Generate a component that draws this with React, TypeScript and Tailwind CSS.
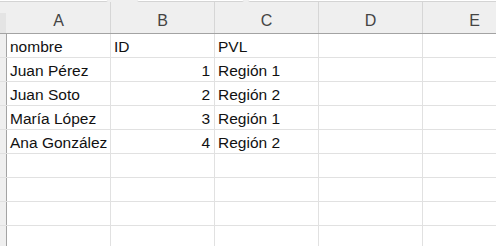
const columns = ["A", "B", "C", "D", "E"];

type Cell = { text: string; align?: "left" | "right" };

const rows: Cell[][] = [
  [{ text: "nombre" }, { text: "ID" }, { text: "PVL" }],
  [{ text: "Juan Pérez" }, { text: "1", align: "right" }, { text: "Región 1" }],
  [{ text: "Juan Soto" }, { text: "2", align: "right" }, { text: "Región 2" }],
  [{ text: "María López" }, { text: "3", align: "right" }, { text: "Región 1" }],
  [{ text: "Ana González" }, { text: "4", align: "right" }, { text: "Región 2" }],
  [],
  [],
  [],
  [],
];

export default function App() {
  return (
    <div
      className="h-[246px] w-[496px] overflow-hidden bg-white"
      style={{ fontFamily: '"Liberation Sans", Arial, sans-serif' }}
    >
      {/* bottoms of the name box / formula bar */}
      <div className="flex h-[2px] bg-[#efefef]">
        <div className="h-[2px] w-[108px] rounded-br-[3px] border-b border-[#d4d4d4] bg-white" />
        <div className="ml-[29px] h-[2px] w-[107px] rounded-b-[3px] border-b border-[#d4d4d4] bg-white" />
        <div className="ml-[4px] h-[2px] flex-1 rounded-bl-[3px] border-b border-[#d4d4d4] bg-white" />
      </div>

      {/* column headers */}
      <div className="flex h-[32px] border-b border-[#a3a3a3] bg-[#efefef]">
        <div className="flex w-[7px] shrink-0 flex-col justify-end">
          <div className="h-[20px] w-[6px] bg-[#e4e4e4]" />
        </div>
        {columns.map((c) => (
          <div
            key={c}
            className="flex w-[104px] shrink-0 items-end justify-center border-r border-[#d6d6d6] pb-[4px] text-[16px] leading-none text-[#444]"
          >
            {c}
          </div>
        ))}
      </div>

      {/* grid */}
      {rows.map((row, r) => (
        <div key={r} className="flex h-[24px] border-b border-[#e1e1e1]">
          <div className="w-[7px] shrink-0 border-r border-[#a3a3a3] bg-[#efefef]" />
          {columns.map((c, i) => {
            const cell = row[i];
            return (
              <div
                key={c}
                className={
                  "flex w-[104px] shrink-0 items-end overflow-hidden whitespace-nowrap border-r border-[#e1e1e1] pl-[3px] pr-[4px] pb-[2px] text-[15.5px] leading-[17px] text-[#111]" +
                  (cell?.align === "right" ? " justify-end" : " justify-start")
                }
              >
                {cell?.text}
              </div>
            );
          })}
        </div>
      ))}
    </div>
  );
}
